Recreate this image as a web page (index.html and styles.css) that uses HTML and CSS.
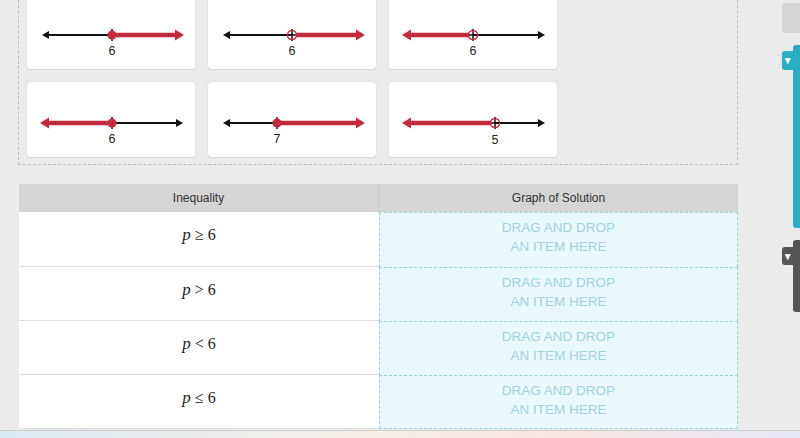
FILE: index.html
```html
<!DOCTYPE html>
<html lang="en">
  <head>
    <meta charset="UTF-8" />
    <meta name="viewport" content="width=device-width, initial-scale=1.0" />
    <title>Inequality Graphs</title>
    <link rel="stylesheet" href="styles.css">
  </head>
  <body>
    <div class="page">
      <div class="main">
        <!-- tray of draggable graphs -->
        <div class="tray">
          <div class="card">
            <svg viewBox="0 0 168 75" width="168" height="75">
              <line x1="17" y1="41" x2="85" y2="41" class="axis" />
              <polygon points="15,41 22,37 22,45" class="head" />
              <line x1="85" y1="41" x2="149" y2="41" class="ray" />
              <polygon points="157,41 148,35.5 148,46.5" class="rayhead" />
              <line x1="85" y1="35" x2="85" y2="47" class="tick" />
              <circle cx="85" cy="41" r="4.5" class="dot" />
              <text x="85" y="61" class="lbl">6</text>
            </svg>
          </div>
          <div class="card">
            <svg viewBox="0 0 168 75" width="168" height="75">
              <line x1="17" y1="41" x2="85" y2="41" class="axis" />
              <polygon points="15,41 22,37 22,45" class="head" />
              <line x1="89" y1="41" x2="149" y2="41" class="ray" />
              <polygon points="157,41 148,35.5 148,46.5" class="rayhead" />
              <line x1="84" y1="35" x2="84" y2="47" class="tick" />
              <line x1="80" y1="41" x2="88" y2="41" class="tick" />
              <circle cx="84" cy="41" r="4.5" class="ring" />
              <text x="84" y="61" class="lbl">6</text>
            </svg>
          </div>
          <div class="card">
            <svg viewBox="0 0 168 75" width="168" height="75">
              <line x1="84" y1="41" x2="152" y2="41" class="axis" />
              <polygon points="156,41 149,37 149,45" class="head" />
              <line x1="21" y1="41" x2="80" y2="41" class="ray" />
              <polygon points="13,41 22,35.5 22,46.5" class="rayhead" />
              <line x1="84" y1="35" x2="84" y2="47" class="tick" />
              <line x1="80" y1="41" x2="88" y2="41" class="tick" />
              <circle cx="84" cy="41" r="4.5" class="ring" />
              <text x="84" y="61" class="lbl">6</text>
            </svg>
          </div>
          <div class="card">
            <svg viewBox="0 0 168 75" width="168" height="75">
              <line x1="85" y1="41" x2="152" y2="41" class="axis" />
              <polygon points="156,41 149,37 149,45" class="head" />
              <line x1="21" y1="41" x2="85" y2="41" class="ray" />
              <polygon points="13,41 22,35.5 22,46.5" class="rayhead" />
              <line x1="85" y1="35" x2="85" y2="47" class="tick" />
              <circle cx="85" cy="41" r="4.5" class="dot" />
              <text x="85" y="61" class="lbl">6</text>
            </svg>
          </div>
          <div class="card">
            <svg viewBox="0 0 168 75" width="168" height="75">
              <line x1="17" y1="41" x2="69" y2="41" class="axis" />
              <polygon points="15,41 22,37 22,45" class="head" />
              <line x1="69" y1="41" x2="149" y2="41" class="ray" />
              <polygon points="157,41 148,35.5 148,46.5" class="rayhead" />
              <line x1="69" y1="35" x2="69" y2="47" class="tick" />
              <circle cx="69" cy="41" r="4.5" class="dot" />
              <text x="69" y="61" class="lbl">7</text>
            </svg>
          </div>
          <div class="card">
            <svg viewBox="0 0 168 75" width="168" height="75">
              <line x1="106" y1="41" x2="152" y2="41" class="axis" />
              <polygon points="156,41 149,37 149,45" class="head" />
              <line x1="21" y1="41" x2="102" y2="41" class="ray" />
              <polygon points="13,41 22,35.5 22,46.5" class="rayhead" />
              <line x1="106" y1="35" x2="106" y2="47" class="tick" />
              <line x1="102" y1="41" x2="110" y2="41" class="tick" />
              <circle cx="106" cy="41" r="4.5" class="ring" />
              <text x="106" y="62" class="lbl">5</text>
            </svg>
          </div>
        </div>

        <!-- matching table -->
        <div class="grid">
          <div class="row head-row">
            <div class="cell left">Inequality</div>
            <div class="cell right">Graph of Solution</div>
          </div>
          <div class="row">
            <div class="cell left math"><i>p</i><span class="rel">≥</span>6</div>
            <div class="cell right drop">DRAG AND DROP<br />AN ITEM HERE</div>
          </div>
          <div class="row">
            <div class="cell left math"><i>p</i><span class="rel">&gt;</span>6</div>
            <div class="cell right drop">DRAG AND DROP<br />AN ITEM HERE</div>
          </div>
          <div class="row">
            <div class="cell left math"><i>p</i><span class="rel">&lt;</span>6</div>
            <div class="cell right drop">DRAG AND DROP<br />AN ITEM HERE</div>
          </div>
          <div class="row">
            <div class="cell left math"><i>p</i><span class="rel">≤</span>6</div>
            <div class="cell right drop">DRAG AND DROP<br />AN ITEM HERE</div>
          </div>
        </div>
      </div>

      <div class="rail">
        <div class="rail-box"></div>
        <div class="panel teal">
          <div class="tab">&#9660;</div>
          <div class="bar"></div>
        </div>
        <div class="panel dark">
          <div class="tab">&#9660;</div>
          <div class="bar"></div>
        </div>
      </div>
    </div>
    <div class="strip"></div>
  </body>
</html>
```

FILE: styles.css
```css
body {
  margin: 0;
  padding: 0;
  height: 438px;
  overflow: hidden;
  background-color: #ebebeb;
  font-family: "Liberation Sans", Arial, sans-serif;
  color: #333;
}

.page {
  display: flex;
  height: 430px;
}

.main {
  width: 782px;
  padding-left: 18px;
  box-sizing: border-box;
}

.tray {
  margin-top: -15px;
  width: 720px;
  box-sizing: border-box;
  border: 1px dashed #bdbdbd;
  padding: 8px 8px 7px 8px;
  display: grid;
  grid-template-columns: repeat(3, 168px);
  column-gap: 13px;
  row-gap: 13px;
}

.card {
  width: 168px;
  height: 75px;
  background-color: #fff;
  border-radius: 3px;
  box-shadow: 0 0 1px rgba(0, 0, 0, 0.25), 0 1px 1px rgba(0, 0, 0, 0.08);
}

.card svg {
  display: block;
}

.axis {
  stroke: #111;
  stroke-width: 2;
}

.head {
  fill: #111;
}

.ray {
  stroke: #c22a3e;
  stroke-width: 4.5;
}

.rayhead {
  fill: #c22a3e;
}

.tick {
  stroke: #111;
  stroke-width: 1.5;
}

.dot {
  fill: #c22a3e;
}

.ring {
  fill: none;
  stroke: #c22a3e;
  stroke-width: 1.5;
}

.lbl {
  font-family: "Liberation Sans", Arial, sans-serif;
  font-size: 12.5px;
  fill: #222;
  text-anchor: middle;
}

.grid {
  margin-top: 19px;
  margin-left: 1px;
  width: 719px;
  background-color: #fff;
}

.row {
  display: flex;
  height: 54px;
}

.row:nth-child(2) {
  height: 55px;
}

.head-row {
  height: 28px;
  background-color: #d5d5d5;
}

.cell {
  box-sizing: border-box;
  text-align: center;
}

.left {
  width: 360px;
}

.right {
  width: 359px;
}

.head-row .cell {
  font-size: 12px;
  line-height: 28px;
  color: #333;
}

.head-row .left {
  border-right: 1px solid #c8c8c8;
}

.math {
  font-family: "Liberation Serif", "DejaVu Serif", serif;
  font-size: 16px;
  line-height: 20px;
  padding-top: 13px;
  color: #222;
  border-bottom: 1px solid #dedede;
}

.math i {
  font-size: 17px;
}

.rel {
  margin: 0 4px;
}

.drop {
  background-color: #eaf8fb;
  border: 1px dashed #98d2d8;
  border-bottom: none;
  color: #9dd5db;
  font-size: 13.5px;
  line-height: 19px;
  padding-top: 5px;
}

.row:last-child .drop {
  border-bottom: 1px dashed #98d2d8;
}

.rail {
  width: 18px;
  display: flex;
  flex-direction: column;
}

.rail-box {
  margin-top: 3px;
  height: 30px;
  background-color: #d6d6d6;
  border-radius: 3px 0 0 3px;
}

.panel {
  display: flex;
  align-items: flex-start;
  margin-top: 12px;
}

.tab {
  width: 12px;
  height: 19px;
  margin-top: 6px;
  color: #fff;
  font-size: 10px;
  line-height: 19px;
  text-align: center;
  border-radius: 3px 0 0 3px;
}

.bar {
  width: 7px;
  border-radius: 3px 0 0 3px;
}

.teal .tab,
.teal .bar {
  background-color: #2aaec2;
}

.teal .bar {
  height: 183px;
}

.dark .tab,
.dark .bar {
  background-color: #555;
}

.dark .tab {
  margin-top: 7px;
  height: 18px;
}

.dark .bar {
  height: 72px;
}

.strip {
  height: 8px;
  border-top: 1px solid #cfcfcf;
  background: linear-gradient(90deg, #dbeaf2 0%, #f3eee8 40%, #f8e6e2 70%, #e6e8f6 100%);
}
```
